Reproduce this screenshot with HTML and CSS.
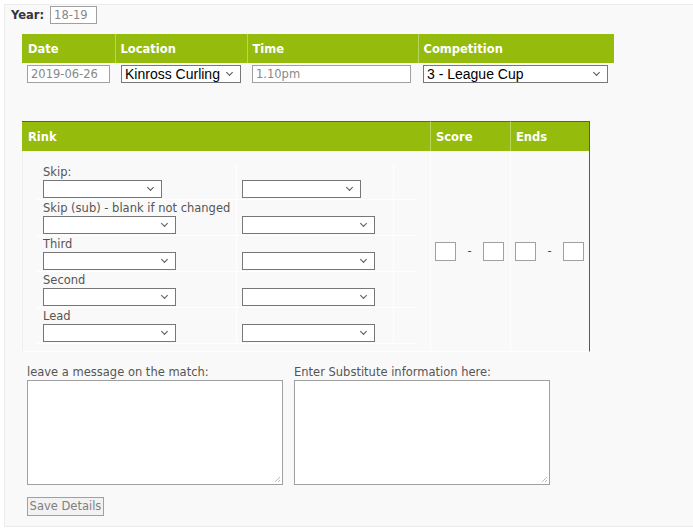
FILE: index.html
```html
<!DOCTYPE html>
<html>
<head>
<meta charset="utf-8">
<link rel="stylesheet" href="styles.css">
</head>
<body>
<div class="panel">
  <div class="year-row">
    <span class="year-label">Year:</span>
    <input class="field year-input" type="text" value="18-19" readonly>
  </div>

  <table class="match">
    <colgroup>
      <col class="c-date"><col class="c-loc"><col class="c-time"><col class="c-comp">
    </colgroup>
    <thead>
      <tr><th>Date</th><th>Location</th><th>Time</th><th>Competition</th></tr>
    </thead>
    <tbody>
      <tr>
        <td><input class="field date-input" type="text" value="2019-06-26" readonly></td>
        <td class="loc-cell"><span class="sel sel-loc">Kinross Curling</span></td>
        <td><input class="field time-input" type="text" value="1.10pm" readonly></td>
        <td><span class="sel sel-comp">3 - League Cup</span></td>
      </tr>
    </tbody>
  </table>

  <table class="rink">
    <colgroup>
      <col class="c-rink"><col class="c-score"><col class="c-ends">
    </colgroup>
    <thead>
      <tr><th class="rh">Rink</th><th class="rh">Score</th><th class="rh rh-last">Ends</th></tr>
    </thead>
    <tbody>
      <tr>
        <td class="players-cell">
          <table class="players">
            <tr>
              <td class="pc1"><div class="plabel">Skip:</div><span class="sel sel-skip"></span></td>
              <td class="pc2"><span class="sel sel-skip"></span></td>
              <td class="pc3"></td>
            </tr>
            <tr>
              <td class="pc1"><div class="plabel">Skip (sub) - blank if not changed</div><span class="sel sel-p"></span></td>
              <td class="pc2"><span class="sel sel-p"></span></td>
              <td class="pc3"></td>
            </tr>
            <tr>
              <td class="pc1"><div class="plabel">Third</div><span class="sel sel-p"></span></td>
              <td class="pc2"><span class="sel sel-p"></span></td>
              <td class="pc3"></td>
            </tr>
            <tr>
              <td class="pc1"><div class="plabel">Second</div><span class="sel sel-p"></span></td>
              <td class="pc2"><span class="sel sel-p"></span></td>
              <td class="pc3"></td>
            </tr>
            <tr>
              <td class="pc1"><div class="plabel">Lead</div><span class="sel sel-p"></span></td>
              <td class="pc2"><span class="sel sel-p"></span></td>
              <td class="pc3"></td>
            </tr>
          </table>
        </td>
        <td class="score-cell">
          <div class="score-row"><span class="box"></span><span class="dash">-</span><span class="box"></span></div>
        </td>
        <td class="score-cell score-last">
          <div class="score-row"><span class="box"></span><span class="dash">-</span><span class="box"></span></div>
        </td>
      </tr>
    </tbody>
  </table>

  <div class="notes">
    <div class="note">
      <div class="nlabel">leave a message on the match:</div>
      <div class="tarea"><span class="grip"></span></div>
    </div>
    <div class="note">
      <div class="nlabel">Enter Substitute information here:</div>
      <div class="tarea"><span class="grip"></span></div>
    </div>
  </div>

  <div class="save-wrap"><span class="save-btn">Save Details</span></div>
</div>
</body>
</html>
```

FILE: styles.css
```css
html, body {
  margin: 0;
  padding: 0;
  background: #ffffff;
  font-family: "DejaVu Sans", Verdana, sans-serif;
  font-size: 11.5px;
  color: #555555;
}

.panel {
  margin: 4px 0 0 4px;
  height: 521px;
  border: 1px solid #ebebeb;
  border-right: none;
  background: #f9f9f9;
}

.year-row {
  display: flex;
  align-items: center;
  padding: 1px 0 0 6px;
  height: 18px;
}
.year-label {
  font-weight: bold;
  color: #333344;
  margin-right: 6px;
}

.field {
  box-sizing: border-box;
  height: 18px;
  border: 1px solid #a0a0a0;
  background: #ffffff;
  color: #888888;
  font-family: "DejaVu Sans", Verdana, sans-serif;
  font-size: 11.5px;
  padding: 0 3px;
  outline: none;
  margin: 0;
}
.year-input { width: 47px; }
.date-input { width: 83px; }
.time-input { width: 159px; }

/* match table */
.match {
  margin: 10px 0 0 17px;
  border-collapse: collapse;
  table-layout: fixed;
  width: 592px;
}
.c-date { width: 93px; }
.c-loc { width: 132px; }
.c-time { width: 171px; }
.c-comp { width: 196px; }

.match th {
  background: #95bb0d;
  color: #ffffff;
  font-weight: bold;
  text-align: left;
  padding: 0 0 0 5px;
  height: 29px;
  border-left: 1px solid #b9d65c;
}
.match th:first-child { border-left: none; padding-left: 6px; }

.match td {
  padding: 2px 0 5px 5px;
  vertical-align: top;
}
.match td.loc-cell { padding-left: 6px; }

.sel {
  position: relative;
  display: block;
  box-sizing: border-box;
  height: 18px;
  border: 1px solid #777777;
  background: #ffffff;
  color: #000000;
  font-family: "Liberation Sans", Arial, sans-serif;
  font-size: 14px;
  line-height: 16px;
  padding-left: 3px;
}
.sel::after {
  content: "";
  position: absolute;
  right: 8px;
  top: 4px;
  width: 4px;
  height: 4px;
  border-right: 1px solid #555555;
  border-bottom: 1px solid #555555;
  transform: rotate(45deg);
}
.sel-loc { width: 120px; }
.sel-comp { width: 185px; }
.sel-skip { width: 119px; }
.sel-p { width: 133px; }

/* rink table */
.rink {
  margin: 33px 0 0 17px;
  border-collapse: separate;
  border-spacing: 0;
  table-layout: fixed;
  width: 568px;
}
.c-rink { width: 408px; }
.c-score { width: 80px; }
.c-ends { width: 80px; }

.rh {
  box-sizing: border-box;
  background: #95bb0d;
  color: #ffffff;
  font-weight: bold;
  text-align: left;
  height: 30px;
  padding: 0 0 0 5px;
  border-top: 1px solid #5a5a5a;
  border-left: 1px solid #b9d65c;
}
.rh:first-child { border-left: none; padding-left: 6px; }
.rh-last { border-right: 1px solid #5a5a5a; }

.players-cell {
  padding: 13px 0 7px 14px;
  vertical-align: top;
  border-left: 1px solid #f0f0f0;
  border-bottom: 1px solid #ffffff;
}
.players {
  border-collapse: collapse;
}
.players td {
  border-bottom: 1px solid #ffffff;
  vertical-align: top;
  padding: 1px 0 1px 0;
}
.players td.pc1 { width: 193px; padding-left: 6px; }
.players td.pc2 {
  width: 151px;
  padding-left: 5px;
  vertical-align: bottom;
  border-left: 1px solid #ffffff;
}
.players td.pc3 { width: 22px; border-left: 1px solid #ffffff; }
.plabel {
  height: 15px;
  line-height: 15px;
  color: #555555;
  white-space: nowrap;
}

.score-cell {
  vertical-align: middle;
  border-left: 1px solid #ffffff;
  border-bottom: 1px solid #ffffff;
}
.score-last { border-right: 1px solid #5a5a5a; }
.score-row {
  display: flex;
  align-items: center;
  padding-left: 3px;
}
.box {
  display: block;
  box-sizing: border-box;
  width: 21px;
  height: 19px;
  border: 1px solid #a0a0a0;
  background: #ffffff;
}
.dash {
  width: 27px;
  text-align: center;
  color: #444466;
}

/* notes */
.notes {
  display: flex;
  gap: 11px;
  margin: 13px 0 0 22px;
}
.nlabel {
  height: 14px;
  line-height: 14px;
  color: #555555;
  margin-bottom: 1px;
}
.tarea {
  position: relative;
  box-sizing: border-box;
  width: 256px;
  height: 105px;
  border: 1px solid #a0a0a0;
  background: #ffffff;
}
.grip {
  position: absolute;
  right: 2px;
  bottom: 2px;
  width: 6px;
  height: 6px;
  background:
    linear-gradient(135deg, transparent 55%, #bbbbbb 55%, #bbbbbb 65%, transparent 65%, transparent 80%, #bbbbbb 80%, #bbbbbb 90%, transparent 90%);
}

.save-wrap {
  margin: 12px 0 0 22px;
}
.save-btn {
  display: inline-block;
  box-sizing: border-box;
  width: 77px;
  height: 19px;
  line-height: 17px;
  border: 1px solid #a0a0a0;
  background: #f2f2f2;
  color: #808080;
  text-align: center;
}
```
